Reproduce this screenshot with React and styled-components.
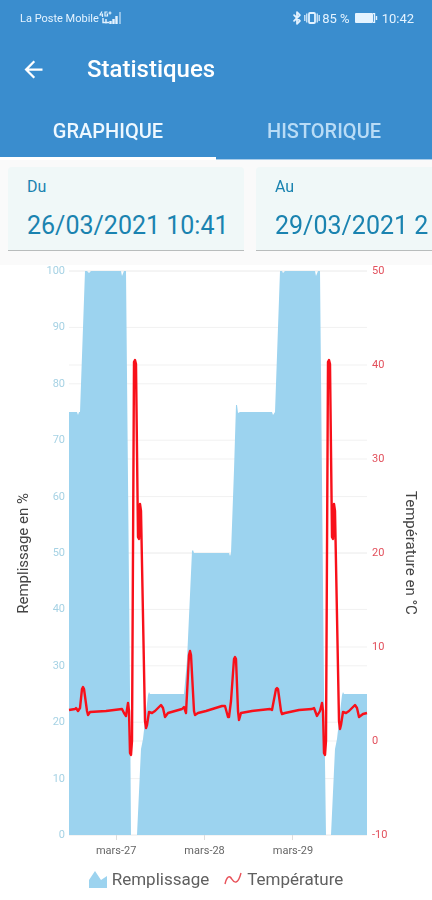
import React, { useState } from 'react';
import styled, { createGlobalStyle } from 'styled-components';
import { Bluetooth } from 'lucide-react';
import { MdArrowBack } from 'react-icons/md';

const GlobalStyle = createGlobalStyle`
    * {
        box-sizing: border-box;
    }

    body {
        margin: 0;
        background-color: #fff;
        font-family: Roboto, 'Liberation Sans', sans-serif;
    }
`;

const Page = styled.div`
    min-height: 100vh;
    overflow: hidden;
`;

const Header = styled.header`
    background-color: #3a8dce;
    color: #fff;
`;

const StatusBar = styled.div`
    display: flex;
    align-items: center;
    justify-content: space-between;
    height: 36px;
    padding: 0 18px 0 20px;
    color: #e4f3ff;

    .group {
        display: flex;
        align-items: center;
    }
    .carrier {
        font-size: 11px;
    }
    .value {
        margin-left: 2px;
        font-size: 13px;
    }
    .battery {
        margin: 0 2px 0 5px;
    }
`;

const AppBar = styled.div`
    display: flex;
    align-items: center;
    height: 66px;
    padding-left: 20px;
`;

const BackButton = styled.button`
    display: flex;
    width: 27px;
    margin-right: 40px;
    padding: 0;
    border: 0;
    background: none;
    color: inherit;
    cursor: pointer;
`;

const Title = styled.h1`
    margin: 0;
    font-size: 24px;
    font-weight: 500;
`;

const Tabs = styled.div`
    display: flex;
    height: 58px;
`;

const Tab = styled.button`
    flex: 1;
    padding: 0;
    border: 0;
    background: none;
    box-shadow: ${(props) => (props.$active ? 'inset 0 -3px #fff' : 'inset 0 -1px #a9cdea')};
    color: ${(props) => (props.$active ? '#eef8ff' : '#b9dcf6')};
    font-family: inherit;
    font-size: 20px;
    font-weight: 500;
    cursor: pointer;
`;

const DateRow = styled.div`
    display: flex;
    gap: 12px;
    padding: 7px 8px 14px;
    overflow-x: auto;
    scrollbar-width: none;
    background-color: #fafafa;
`;

const DateField = styled.label`
    flex: 0 0 236px;
    height: 84px;
    padding: 10px 0 0 19px;
    border-bottom: 1px solid #b8bcbc;
    border-radius: 4px 4px 0 0;
    background-color: #f0f8f8;
    color: #1a83b0;
    font-size: 16px;
    line-height: 20px;
`;

const DateInput = styled.input`
    display: block;
    width: 100%;
    height: 36px;
    margin-top: 10px;
    padding: 0;
    border: 0;
    outline: 0;
    background: none;
    color: inherit;
    font-family: inherit;
    font-size: 25px;
`;

const ChartArea = styled.main`
    display: grid;
    grid-template-columns: 69px 1fr 65px;
    padding-top: 6px;
`;

const Axis = styled.div`
    display: flex;
    justify-content: space-between;
    align-items: center;
    flex-direction: ${(props) => (props.$right ? 'row-reverse' : 'row')};
    padding: ${(props) => (props.$right ? '0 13px 0 5px' : '0 4px 0 15px')};
    color: ${(props) => (props.$right ? '#e2505c' : '#a6d2e4')};
`;

const AxisTitle = styled.span`
    writing-mode: vertical-rl;
    transform: ${(props) => (props.$flip ? 'rotate(180deg)' : 'none')};
    color: #444;
    font-size: 15px;
    line-height: 16px;
`;

/* half a line sticks out at both ends, so each label is centred on its grid line */
const Ticks = styled.div`
    display: flex;
    flex-direction: column;
    justify-content: space-between;
    align-self: stretch;
    margin: -6px 0;
    text-align: ${(props) => props.$align};
    font-size: 11px;
    line-height: 12px;
`;

const Plot = styled.svg`
    display: block;
    width: 100%;
    height: calc(100vh - 336px);
    min-height: 300px;
    overflow: visible;

    .grid {
        stroke: #f1f1f1;
    }
    .fill {
        fill: #9cd3ef;
    }
    .temperature {
        fill: none;
        stroke: #f8101a;
        stroke-width: 2.4;
        stroke-linejoin: round;
    }
    line,
    path {
        vector-effect: non-scaling-stroke;
    }
`;

const DayAxis = styled.div`
    grid-column: 2;
    display: flex;
    height: 27px;
    padding: 0 10% 0 1%;
    color: #666;
    font-size: 11px;
    line-height: 12px;

    span {
        display: flex;
        flex: 1;
        flex-direction: column;
        align-items: center;
        gap: 5px;
    }
    span::before {
        content: '';
        width: 1px;
        height: 5px;
        background-color: #ddd;
    }
`;

const Legend = styled.div`
    display: flex;
    justify-content: center;
    gap: 15px;
    padding: 5px 0;
    color: #606060;
    font-size: 17px;
    line-height: 24px;

    span {
        display: flex;
        align-items: center;
        gap: 5px;
    }
`;

const FILL_TICKS = [100, 90, 80, 70, 60, 50, 40, 30, 20, 10, 0];
const TEMP_TICKS = [50, 40, 30, 20, 10, 0, -10];
const DAYS = ['mars-27', 'mars-28', 'mars-29'];

const WIDTH = 298;
const HEIGHT = 564;

const FILL_POINTS = [
    [0, 141], [8, 141], [9, 144], [10, 141], [11, 141], [16, 0], [18, 0], [20, 2], [22, 0],
    [52, 0], [53, 5], [55, 0], [57, 0], [59, 209], [61, 419], [62, 564], [68, 564],
    [72, 478], [74, 468], [76, 450], [79, 424], [80, 421], [81, 423], [115, 423], [118, 389],
    [123, 280], [124, 279], [125, 282], [160, 282], [161, 285], [162, 282], [165, 199],
    [167, 134], [168, 134], [169, 142], [171, 141], [203, 141], [204, 144], [206, 141],
    [211, 0], [213, 0], [214, 2], [216, 0], [246, 0], [247, 5], [249, 0], [251, 0],
    [253, 209], [255, 419], [257, 564], [262, 564], [266, 478], [268, 468], [270, 450],
    [273, 424], [274, 421], [275, 423], [298, 423]
];

const TEMP_POINTS = [
    [0, 439], [6, 438], [7, 437], [9, 440], [11, 437], [13, 418], [14, 416], [15, 418],
    [18, 440], [19, 444], [21, 441], [37, 440], [53, 438], [55, 442], [57, 445], [59, 432],
    [60, 440], [61, 482], [62, 484], [63, 470], [65, 91], [66, 89], [67, 93], [69, 266],
    [70, 268], [71, 233], [72, 240], [76, 450], [77, 457], [78, 454], [80, 441], [83, 442],
    [86, 440], [92, 434], [94, 437], [96, 446], [99, 442], [106, 440], [113, 438], [115, 436],
    [117, 442], [120, 384], [121, 380], [122, 384], [125, 440], [126, 444], [129, 442],
    [137, 440], [153, 435], [156, 435], [159, 446], [160, 446], [162, 430], [165, 388],
    [166, 386], [167, 388], [169, 440], [170, 449], [172, 442], [183, 440], [201, 438],
    [203, 439], [207, 418], [208, 417], [209, 418], [212, 440], [213, 443], [216, 442],
    [230, 439], [243, 438], [245, 437], [248, 445], [251, 440], [253, 432], [254, 440],
    [255, 482], [256, 484], [257, 470], [259, 91], [260, 89], [261, 93], [263, 266],
    [264, 268], [265, 233], [266, 240], [270, 450], [271, 458], [272, 454], [274, 441],
    [277, 442], [280, 440], [286, 434], [288, 437], [290, 446], [294, 443], [298, 442]
];

const toPath = (points) => 'M' + points.map((p) => p.join(' ')).join('L');

const GridLines = ({ count }) => {
    return Array.from({ length: count + 1 }, (_, i) => {
        const y = (HEIGHT / count) * i;
        return <line key={i} className="grid" x1="0" x2={WIDTH} y1={y} y2={y} />;
    });
};

const SignalIcon = () => (
    <svg width="23" height="14" viewBox="0 0 23 14" fill="none" stroke="currentColor" aria-hidden="true">
        <path d="M3 0.5L1 4H4M3.5 2.5V6M8.5 1H6V5H8.5V3H7.5M9.5 2H12.5M11 0.5V3.5" strokeWidth="1.2" />
        <path d="M4 7V11.5H10M7 8V12.5" strokeWidth="1.4" />
        <path d="M11.5 10V13M14.5 8V13M17.5 5V13" strokeWidth="2.4" />
        <path d="M21 1V13" strokeWidth="2" opacity="0.5" />
    </svg>
);

const VibrateIcon = () => (
    <svg width="16" height="12" viewBox="0 0 16 12" fill="none" stroke="currentColor" aria-hidden="true">
        <rect x="5" y="1" width="6" height="10" rx="1" strokeWidth="1.8" />
        <path d="M2.8 1.5V10.5M13.2 1.5V10.5M0.8 3V9M15.2 3V9" strokeWidth="1.2" />
    </svg>
);

const BatteryIcon = () => (
    <svg className="battery" width="23" height="10" viewBox="0 0 23 10" aria-hidden="true">
        <rect x="0" y="0" width="18" height="10" rx="1" fill="currentColor" />
        <path d="M18 0.6H19.5V9.4H18M21.5 3V7" fill="none" stroke="currentColor" strokeWidth="1.4" />
    </svg>
);

/**
 * Statistics screen: tank filling level and temperature over a period.
 */
const App = () => {
    const [tab, setTab] = useState('graph');
    const [from, setFrom] = useState('26/03/2021 10:41');
    const [to, setTo] = useState('29/03/2021 2');

    return (
        <Page>
            <GlobalStyle />
            <Header>
                <StatusBar>
                    <div className="group">
                        <span className="carrier">La Poste Mobile</span>
                        <SignalIcon />
                    </div>
                    <div className="group">
                        <Bluetooth size={14} strokeWidth={3} />
                        <VibrateIcon />
                        <span className="value">85 %</span>
                        <BatteryIcon />
                        <span className="value">10:42</span>
                    </div>
                </StatusBar>
                <AppBar>
                    <BackButton aria-label="Retour">
                        <MdArrowBack size={27} />
                    </BackButton>
                    <Title>Statistiques</Title>
                </AppBar>
                <Tabs role="tablist">
                    <Tab
                        role="tab"
                        aria-selected={tab === 'graph'}
                        $active={tab === 'graph'}
                        onClick={() => setTab('graph')}>
                        GRAPHIQUE
                    </Tab>
                    <Tab
                        role="tab"
                        aria-selected={tab === 'history'}
                        $active={tab === 'history'}
                        onClick={() => setTab('history')}>
                        HISTORIQUE
                    </Tab>
                </Tabs>
            </Header>
            <DateRow>
                <DateField>
                    Du
                    <DateInput value={from} onChange={(e) => setFrom(e.target.value)} />
                </DateField>
                <DateField>
                    Au
                    <DateInput value={to} onChange={(e) => setTo(e.target.value)} />
                </DateField>
            </DateRow>
            <ChartArea>
                <Axis>
                    <AxisTitle $flip>Remplissage en %</AxisTitle>
                    <Ticks $align="right">
                        {FILL_TICKS.map((t) => <span key={t}>{t}</span>)}
                    </Ticks>
                </Axis>
                <Plot viewBox={`0 0 ${WIDTH} ${HEIGHT}`} preserveAspectRatio="none">
                    <GridLines count={10} />
                    <GridLines count={6} />
                    <path className="fill" d={`${toPath(FILL_POINTS)}V${HEIGHT}H0Z`} />
                    <path className="temperature" d={toPath(TEMP_POINTS)} />
                </Plot>
                <Axis $right>
                    <AxisTitle>Température en °C</AxisTitle>
                    <Ticks $align="left">
                        {TEMP_TICKS.map((t) => <span key={t}>{t}</span>)}
                    </Ticks>
                </Axis>
                <DayAxis>
                    {DAYS.map((d) => <span key={d}>{d}</span>)}
                </DayAxis>
            </ChartArea>
            <Legend>
                <span>
                    <svg width="18" height="17" viewBox="0 0 18 17" aria-hidden="true">
                        <path d="M0 17V9L6 0L12 9L18 5V17Z" fill="#9cd3ef" />
                    </svg>
                    Remplissage
                </span>
                <span>
                    <svg width="18" height="14" viewBox="0 0 18 14" aria-hidden="true">
                        <path
                            d="M1 12C2 7 4 4 6 5C8 6 9 11 12 10C15 9 16 5 17 1"
                            fill="none"
                            stroke="#e8525a"
                            strokeWidth="1.4"
                        />
                    </svg>
                    Température
                </span>
            </Legend>
        </Page>
    );
};

export default App;
